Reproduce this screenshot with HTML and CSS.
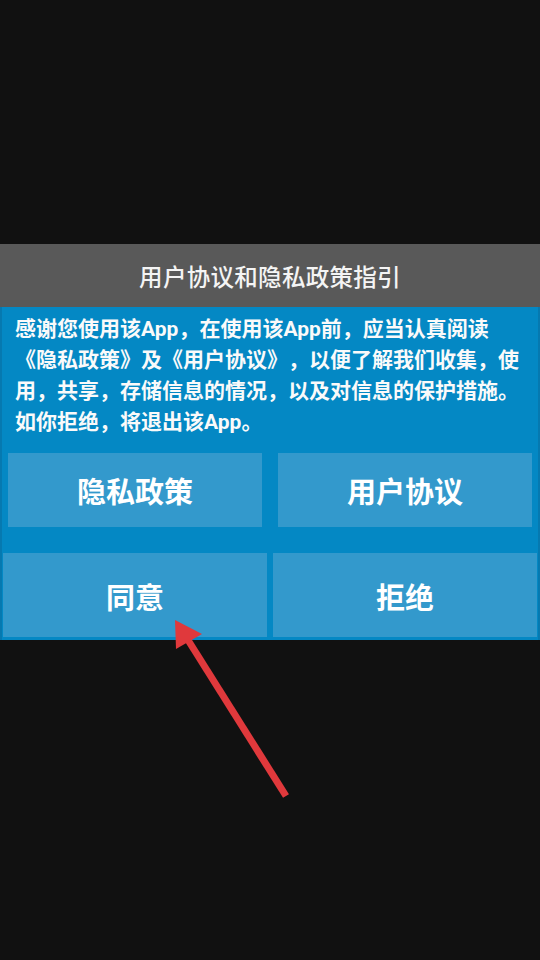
FILE: index.html
```html
<!DOCTYPE html>
<html lang="zh-CN">
<head>
<meta charset="utf-8">
<title>用户协议和隐私政策指引</title>
<link rel="stylesheet" href="styles.css">
</head>
<body>
<div class="screen">
  <div class="dialog">
    <div class="dialog-title">用户协议和隐私政策指引</div>
    <div class="dialog-body">
      <p class="dialog-text">感谢您使用该App，在使用该App前，应当认真阅读<br>《隐私政策》及《用户协议》，以便了解我们收集，使<br>用，共享，存储信息的情况，以及对信息的保护措施。<br>如你拒绝，将退出该App。</p>
      <div class="row row-links">
        <div class="btn">隐私政策</div>
        <div class="btn">用户协议</div>
      </div>
      <div class="row row-actions">
        <div class="btn">同意</div>
        <div class="btn">拒绝</div>
      </div>
    </div>
  </div>
  <svg class="pointer" width="540" height="960" viewBox="0 0 540 960">
    <line x1="286" y1="796" x2="188" y2="640" stroke="#e0393c" stroke-width="7" stroke-linecap="butt"/>
    <polygon points="175,620 176,649 202,634" fill="#e0393c"/>
  </svg>
</div>
</body>
</html>
```
FILE: styles.css
```css
html, body {
  margin: 0;
  padding: 0;
  background: #111111;
}
.screen {
  position: relative;
  width: 540px;
  height: 960px;
  padding-top: 244px;
  box-sizing: border-box;
  font-family: Roboto, "Noto Sans CJK SC", "Noto Sans", sans-serif;
  color: #ffffff;
  text-spacing-trim: space-all;
}
.dialog {
  display: flex;
  flex-direction: column;
}
.dialog-title {
  height: 63px;
  background: #595959;
  display: flex;
  align-items: center;
  justify-content: center;
  font-size: 23.5px;
  font-weight: 500;
  color: #f4f4f4;
  letter-spacing: 0.3px;
}
.dialog-body {
  background: #0488c4;
  box-shadow: inset 2px 0 0 #0679b0, inset -2px 0 0 #0679b0;
  padding: 7px 0 3px;
  display: flex;
  flex-direction: column;
}
.dialog-text {
  margin: 0;
  padding: 0 0 0 15px;
  font-size: 21px;
  line-height: 31px;
  font-weight: 700;
  white-space: nowrap;
  color: #fafafa;
}
.row {
  display: grid;
  grid-template-columns: 1fr 1fr;
}
.row-links {
  margin-top: 15px;
  padding: 0 8px;
  column-gap: 16px;
}
.row-links .btn {
  height: 74px;
}
.row-actions {
  margin-top: 26px;
  padding: 0 3px;
  column-gap: 6px;
}
.row-actions .btn {
  height: 84px;
  padding-top: 2px;
  box-sizing: border-box;
}
.btn {
  background: #3399cc;
  display: flex;
  align-items: center;
  justify-content: center;
  font-size: 29px;
  font-weight: 700;
  color: #ffffff;
}
.pointer {
  position: absolute;
  left: 0;
  top: 0;
  pointer-events: none;
}
```
